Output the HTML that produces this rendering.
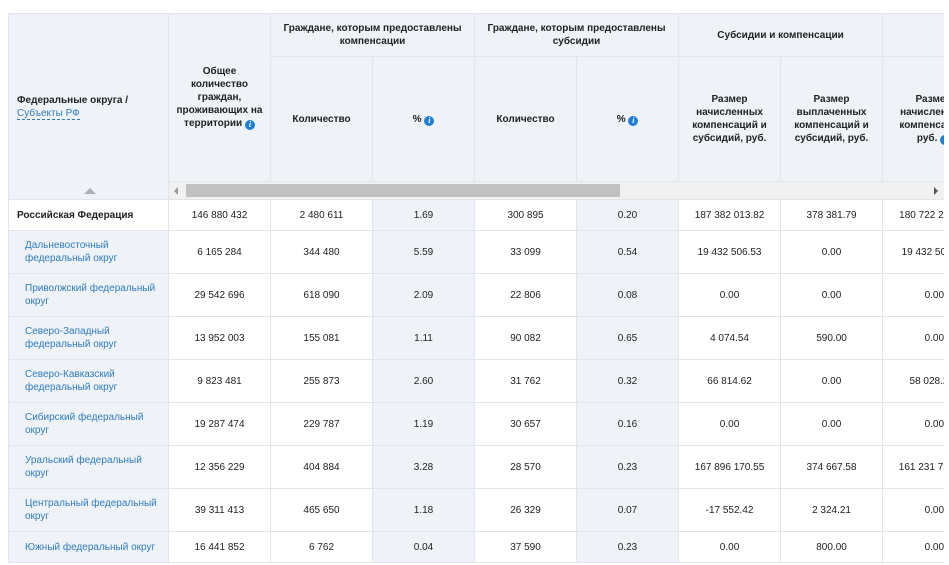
<!DOCTYPE html>
<html><head><meta charset="utf-8"><style>
body{margin:0;background:#fff;font-family:"Liberation Sans",Arial,sans-serif;font-size:10px;color:#222;}
.wrap{position:absolute;left:8px;top:13px;width:936px;height:552px;overflow:hidden;}
table{border-collapse:collapse;table-layout:fixed;width:977px;}
td,th{border:1px solid #e1e6ec;padding:0;text-align:center;vertical-align:middle;line-height:13px;overflow:hidden;white-space:nowrap;}
th{background:#eff3f7;font-weight:bold;font-size:10px;}
td{font-size:10px;}
.g{background:#eff3f7;}
.d{text-align:left;padding-left:16px;color:#2f7bc0;}
.rf{font-weight:bold;text-align:left;padding-left:8px;}
.i{display:inline-block;width:10px;height:10px;border-radius:50%;background:#1f7fd8;color:#fff;font-size:8px;line-height:10px;font-style:italic;font-weight:bold;text-align:center;vertical-align:-1px;font-family:"Liberation Serif",serif;}
.lnk{color:#2f7bc0;font-weight:normal;border-bottom:1px dashed #2f7bc0;}
.sb{background:#f1f1f1;position:relative;border:none;}
</style></head><body>
<div class="wrap">
<table>
<colgroup><col style="width:160px"><col style="width:102px"><col style="width:102px"><col style="width:102px"><col style="width:102px"><col style="width:102px"><col style="width:102px"><col style="width:102px"><col style="width:102px"></colgroup>
<tr style="height:43px">
<th rowspan="3" style="text-align:left;padding-left:8px;position:relative">Федеральные округа /<br><span class="lnk">Субъекты РФ</span><div style="position:absolute;left:75px;bottom:5px;width:0;height:0;border-left:6px solid transparent;border-right:6px solid transparent;border-bottom:6px solid #aab0b6"></div></th>
<th rowspan="2">Общее<br>количество<br>граждан,<br>проживающих на<br>территории <span class="i">i</span></th>
<th colspan="2">Граждане, которым предоставлены<br>компенсации</th>
<th colspan="2">Граждане, которым предоставлены<br>субсидии</th>
<th colspan="2">Субсидии и компенсации</th>
<th></th>
</tr>
<tr style="height:125px">
<th>Количество</th><th>% <span class="i">i</span></th>
<th>Количество</th><th>% <span class="i">i</span></th>
<th>Размер<br>начисленных<br>компенсаций и<br>субсидий, руб.</th>
<th>Размер<br>выплаченных<br>компенсаций и<br>субсидий, руб.</th>
<th>Размер<br>начисленных<br>компенсаций,<br>руб. <span class="i">i</span></th>
</tr>
<tr style="height:18px"><td colspan="8" class="sb"><div style="position:absolute;left:5px;top:5px;border-top:4px solid transparent;border-bottom:4px solid transparent;border-right:4px solid #999"></div><div style="position:absolute;left:17px;top:2px;width:434px;height:13px;background:#c1c1c1"></div><div style="position:absolute;left:765px;top:5px;border-top:4px solid transparent;border-bottom:4px solid transparent;border-left:4px solid #555"></div></td></tr>
<tr style="height:31px"><td class="rf">Российская Федерация</td><td>146 880 432</td><td>2 480 611</td><td class="g">1.69</td><td>300 895</td><td class="g">0.20</td><td>187 382 013.82</td><td>378 381.79</td><td>180 722 285.11</td></tr>
<tr style="height:43px"><td class="d g">Дальневосточный<br>федеральный округ</td><td>6 165 284</td><td>344 480</td><td class="g">5.59</td><td>33 099</td><td class="g">0.54</td><td>19 432 506.53</td><td>0.00</td><td>19 432 506.53</td></tr>
<tr style="height:43px"><td class="d g">Приволжский федеральный<br>округ</td><td>29 542 696</td><td>618 090</td><td class="g">2.09</td><td>22 806</td><td class="g">0.08</td><td>0.00</td><td>0.00</td><td style="text-align:right;padding-right:40px">0.00</td></tr>
<tr style="height:43px"><td class="d g">Северо-Западный<br>федеральный округ</td><td>13 952 003</td><td>155 081</td><td class="g">1.11</td><td>90 082</td><td class="g">0.65</td><td>4 074.54</td><td>590.00</td><td style="text-align:right;padding-right:40px">0.00</td></tr>
<tr style="height:43px"><td class="d g">Северо-Кавказский<br>федеральный округ</td><td>9 823 481</td><td>255 873</td><td class="g">2.60</td><td>31 762</td><td class="g">0.32</td><td>66 814.62</td><td>0.00</td><td style="text-align:right;padding-right:30px">58 028.21</td></tr>
<tr style="height:43px"><td class="d g">Сибирский федеральный<br>округ</td><td>19 287 474</td><td>229 787</td><td class="g">1.19</td><td>30 657</td><td class="g">0.16</td><td>0.00</td><td>0.00</td><td style="text-align:right;padding-right:40px">0.00</td></tr>
<tr style="height:43px"><td class="d g">Уральский федеральный<br>округ</td><td>12 356 229</td><td>404 884</td><td class="g">3.28</td><td>28 570</td><td class="g">0.23</td><td>167 896 170.55</td><td>374 667.58</td><td>161 231 759.30</td></tr>
<tr style="height:43px"><td class="d g">Центральный федеральный<br>округ</td><td>39 311 413</td><td>465 650</td><td class="g">1.18</td><td>26 329</td><td class="g">0.07</td><td>-17 552.42</td><td>2 324.21</td><td style="text-align:right;padding-right:40px">0.00</td></tr>
<tr style="height:31px"><td class="d g">Южный федеральный округ</td><td>16 441 852</td><td>6 762</td><td class="g">0.04</td><td>37 590</td><td class="g">0.23</td><td>0.00</td><td>800.00</td><td style="text-align:right;padding-right:40px">0.00</td></tr>
</table>
</div>
</body></html>
